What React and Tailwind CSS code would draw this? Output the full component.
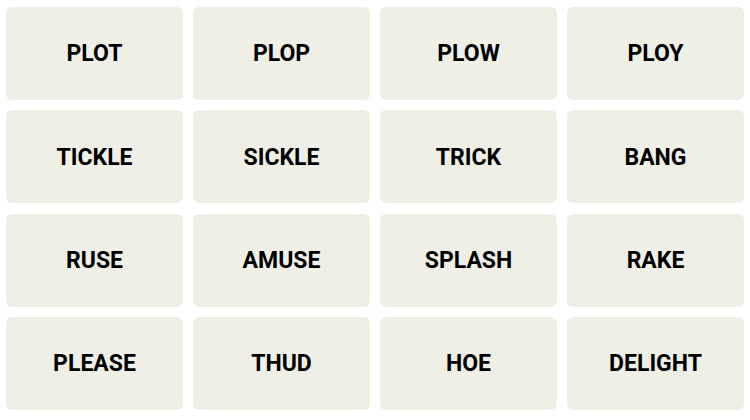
const words = [
  "PLOT", "PLOP", "PLOW", "PLOY",
  "TICKLE", "SICKLE", "TRICK", "BANG",
  "RUSE", "AMUSE", "SPLASH", "RAKE",
  "PLEASE", "THUD", "HOE", "DELIGHT",
];

export default function App() {
  return (
    <div className="w-[750px] h-[420px] bg-white px-[6px] pt-[7px]">
      <div className="grid grid-cols-4 auto-rows-[93px] gap-x-[10px] gap-y-[10.3px]">
        {words.map((w) => (
          <button
            key={w}
            className="flex items-center justify-center pt-[2px] rounded-[6px] bg-[#efefe6] text-[23px] font-bold text-black uppercase"
            style={{ fontFamily: "Roboto, 'Liberation Sans', sans-serif" }}
          >
            {w}
          </button>
        ))}
      </div>
    </div>
  );
}
